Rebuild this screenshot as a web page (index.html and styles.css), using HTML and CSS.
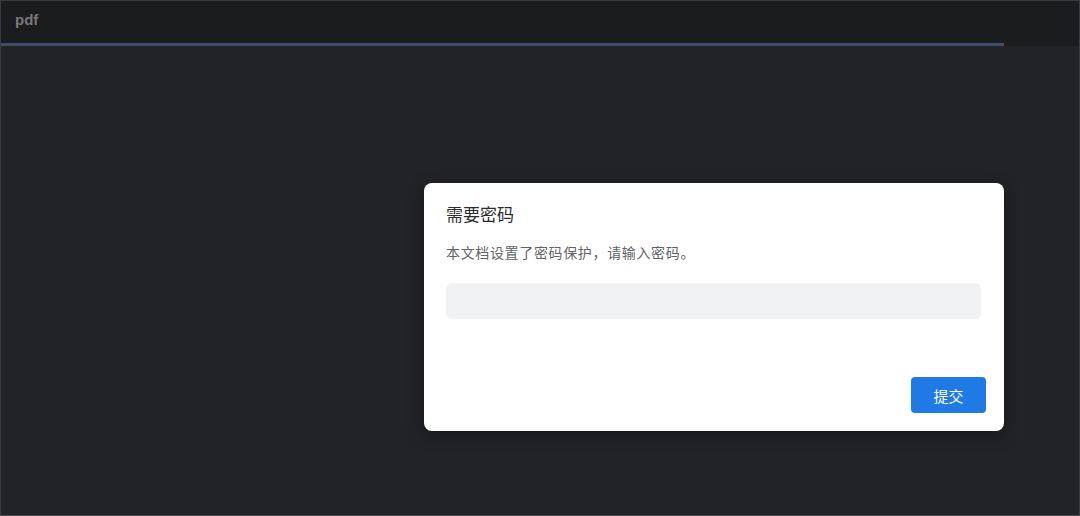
FILE: index.html
```html
<!DOCTYPE html>
<html lang="zh">
<head>
<meta charset="utf-8">
<link rel="stylesheet" href="styles.css">
</head>
<body>
<div class="app">
  <header class="topbar">
    <span class="title">pdf</span>
  </header>
  <div class="progress"><div class="progress-fill"></div></div>
  <main class="stage">
    <div class="dialog">
      <h2 class="dialog-title">需要密码</h2>
      <p class="dialog-text">本文档设置了密码保护，请输入密码。</p>
      <input class="dialog-input" type="password">
      <div class="dialog-actions">
        <button class="btn-primary">提交</button>
      </div>
    </div>
  </main>
</div>
</body>
</html>
```
FILE: styles.css
```css
* { box-sizing: border-box; }
html, body { margin: 0; height: 100%; }
body {
  background: #222326;
  font-family: "Noto Sans CJK SC", "Liberation Sans", sans-serif;
}
.app {
  height: 516px;
  display: flex;
  flex-direction: column;
  border: 1px solid #3a3b3e;
  border-bottom-color: #4a4b4e;
}
.topbar {
  height: 42px;
  background: #1b1c1e;
  display: flex;
  align-items: center;
  padding: 0 14px;
}
.title {
  font-family: "Liberation Sans", "Noto Sans", sans-serif;
  font-weight: bold;
  font-size: 15px;
  color: #77787b;
  margin-top: -6px;
}
.progress {
  height: 3px;
  background: #1b1c1e;
}
.progress-fill {
  height: 3px;
  width: 1003px;
  background: #3d4d68;
}
.stage {
  flex: 1;
  position: relative;
  background: #222326;
}
.dialog {
  position: absolute;
  left: 423px;
  top: 137px;
  width: 580px;
  height: 248px;
  background: #fff;
  border-radius: 8px;
  padding: 20px 22px 18px;
  display: flex;
  flex-direction: column;
  box-shadow: 0 4px 16px rgba(0,0,0,0.35);
}
.dialog-title {
  margin: 0;
  font-size: 17px;
  font-weight: normal;
  color: #2c2c2c;
  line-height: 22px;
}
.dialog-text {
  margin: 17px 0 0;
  font-size: 14px;
  letter-spacing: 0.65px;
  color: #5f6368;
  line-height: 20px;
}
.dialog-input {
  margin-top: 21px;
  width: 535px;
  height: 36px;
  border: none;
  background: #f1f2f3;
  border-radius: 6px;
  outline: none;
}
.dialog-actions {
  margin-top: auto;
  display: flex;
  justify-content: flex-end;
  margin-right: -4px;
}
.btn-primary {
  width: 75px;
  height: 36px;
  border: none;
  border-radius: 4px;
  background: #1f7ae6;
  color: #fff;
  font-family: "Noto Sans CJK SC", sans-serif;
  font-size: 15px;
}
```
